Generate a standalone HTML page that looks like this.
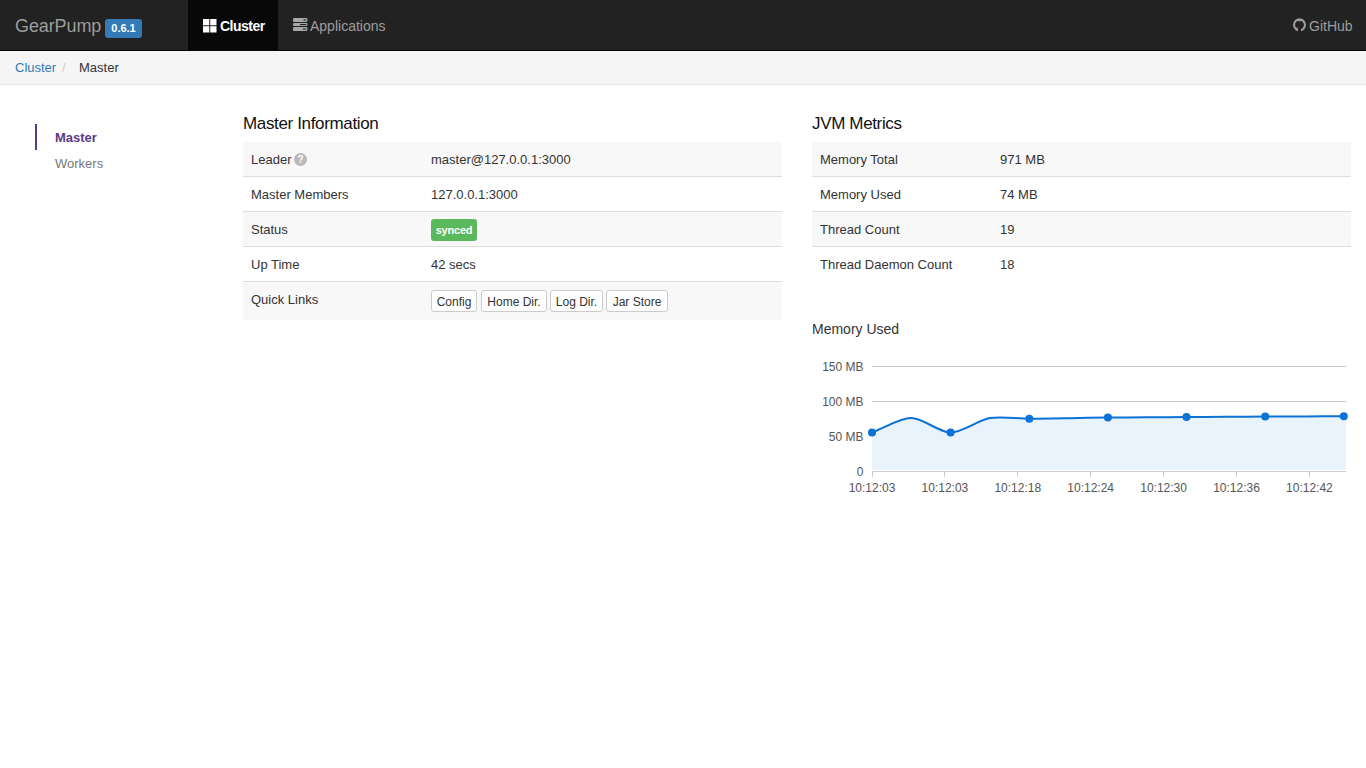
<!DOCTYPE html>
<html><head><meta charset="utf-8">
<style>
*{box-sizing:border-box;margin:0;padding:0}
html,body{width:1366px;height:768px;overflow:hidden;background:#fff;font-family:"Liberation Sans",sans-serif;color:#333;font-size:13px}
.a{position:absolute;white-space:nowrap}
#nav{position:absolute;left:0;top:0;width:1366px;height:51px;background:#222;border-bottom:1px solid #080808}
#act{position:absolute;left:188px;top:0;width:90px;height:50px;background:#080808}
#brand{left:15px;top:16px;font-size:18px;color:#9d9d9d;line-height:20px;letter-spacing:-0.1px}
#badge{left:105px;top:19px;width:37px;height:19px;background:#337ab7;border-radius:3px;color:#fff;font-weight:bold;font-size:11px;line-height:19px;text-align:center}
.nt{font-size:14px;line-height:20px;top:16px}
#bc{position:absolute;left:0;top:51px;width:1366px;height:34px;background:#f5f5f5;border-bottom:1px solid #e6e6e6}
#side{position:absolute;left:35px;top:124px;width:2px;height:26px;background:#5a3b86}
.h{font-size:17px;line-height:20px;color:#111;letter-spacing:-0.35px}
.row{position:absolute;height:35px;border-bottom:1px solid #ddd}
.row.s{background:#f8f8f8}
.row.last{border-bottom:none;height:38px}
.c1,.c2{position:absolute;top:0;line-height:16px;padding-top:10px;font-size:13px;color:#333}
.c1{left:8px}
.c2{left:188px}
.btn{position:absolute;top:8px;height:22px;border:1px solid #ccc;border-radius:3px;background:#fff;font-size:12px;line-height:20px;padding-top:1px;color:#333;text-align:center}
.lbl{position:absolute;left:188px;top:7px;width:46px;height:22px;background:#5cb85c;color:#fff;font-weight:bold;font-size:11px;border-radius:3px;line-height:22px;text-align:center;letter-spacing:-0.2px}
</style></head><body>
<div id="nav"></div>
<div id="act"></div>
<div class="a" id="brand">GearPump</div>
<div class="a" id="badge">0.6.1</div>
<svg class="a" style="left:203px;top:19px" width="14" height="14"><rect x="0" y="0" width="6.3" height="6.3" fill="#fff"/><rect x="7.2" y="0" width="6.3" height="6.3" fill="#fff"/><rect x="0" y="7.2" width="6.3" height="6.3" fill="#fff"/><rect x="7.2" y="7.2" width="6.3" height="6.3" fill="#fff"/></svg>
<div class="a nt" style="left:220px;color:#fff;font-weight:bold;letter-spacing:-0.5px">Cluster</div>
<svg class="a" style="left:293px;top:18px" width="15" height="14"><rect x="0" y="0" width="14.4" height="3.9" rx="1.2" fill="#a8a8a8"/><rect x="0" y="5" width="14.4" height="3" rx="1" fill="#a8a8a8"/><rect x="0" y="9.1" width="14.4" height="3.9" rx="1.2" fill="#a8a8a8"/><rect x="10.5" y="1.3" width="2.8" height="1.3" fill="#333"/><rect x="7" y="6" width="6.3" height="1.1" fill="#222"/><rect x="9.8" y="10.4" width="3.5" height="1.3" fill="#333"/><circle cx="12.5" cy="3.2" r=".8" fill="#5c5"/><circle cx="12.5" cy="9.8" r=".8" fill="#5c5"/></svg>
<div class="a nt" style="left:310px;color:#9d9d9d">Applications</div>
<svg class="a" style="left:1292px;top:17px" width="16" height="16"><circle cx="7.5" cy="7.8" r="5.5" fill="none" stroke="#9d9d9d" stroke-width="2.1"/><rect x="4.8" y="2.6" width="5.4" height="1.6" fill="#9d9d9d"/><rect x="6" y="11.5" width="3" height="3.5" fill="#222"/><rect x="4.6" y="10.5" width="1.2" height="1.6" fill="#9d9d9d"/></svg>
<div class="a nt" style="left:1309px;color:#9d9d9d">GitHub</div>

<div id="bc"></div>
<div class="a" style="left:15px;top:60px;font-size:13px;line-height:16px;color:#337ab7">Cluster</div>
<div class="a" style="left:62px;top:60px;font-size:13px;line-height:16px;color:#ccc">/</div>
<div class="a" style="left:79px;top:60px;font-size:13px;line-height:16px;color:#333">Master</div>

<div id="side"></div>
<div class="a" style="left:55px;top:130px;font-size:13px;line-height:16px;font-weight:bold;color:#5a3b86">Master</div>
<div class="a" style="left:55px;top:156px;font-size:13px;line-height:16px;color:#777">Workers</div>

<div class="a h" style="left:243px;top:114px">Master Information</div>
<div class="row s" style="left:243px;top:142px;width:539px"><div class="c1">Leader</div><div style="position:absolute;left:51px;top:11px;width:13px;height:13px;border-radius:50%;background:#b8b8b8;color:#fff;font-size:10px;line-height:13px;text-align:center;font-weight:bold">?</div><div class="c2">master@127.0.0.1:3000</div></div>
<div class="row" style="left:243px;top:177px;width:539px"><div class="c1">Master Members</div><div class="c2">127.0.0.1:3000</div></div>
<div class="row s" style="left:243px;top:212px;width:539px"><div class="c1">Status</div><div class="lbl">synced</div></div>
<div class="row" style="left:243px;top:247px;width:539px"><div class="c1">Up Time</div><div class="c2">42 secs</div></div>
<div class="row s last" style="left:243px;top:282px;width:539px"><div class="c1">Quick Links</div>
<div class="btn" style="left:188px;width:46px">Config</div><div class="btn" style="left:238px;width:66px">Home Dir.</div><div class="btn" style="left:307px;width:53px">Log Dir.</div><div class="btn" style="left:363px;width:62px">Jar Store</div></div>

<div class="a h" style="left:812px;top:114px">JVM Metrics</div>
<div class="row s" style="left:812px;top:142px;width:539px"><div class="c1">Memory Total</div><div class="c2">971 MB</div></div>
<div class="row" style="left:812px;top:177px;width:539px"><div class="c1">Memory Used</div><div class="c2">74 MB</div></div>
<div class="row s" style="left:812px;top:212px;width:539px"><div class="c1">Thread Count</div><div class="c2">19</div></div>
<div class="row" style="left:812px;top:247px;width:539px;border-bottom:none"><div class="c1">Thread Daemon Count</div><div class="c2">18</div></div>

<div class="a" style="left:812px;top:321px;font-size:14px;line-height:16px;color:#333">Memory Used</div>

<!--CHART--><svg class="a" style="left:0;top:0" width="1366" height="768">
<g stroke="#ccc" stroke-width="1" shape-rendering="crispEdges">
<line x1="872" y1="366.5" x2="1346" y2="366.5"/>
<line x1="872" y1="401.5" x2="1346" y2="401.5"/>
</g>
<path d="M872.0 432.5 C883.8 428.1 899.5 418.0 911.3 418.0 C923.1 418.0 938.8 432.5 950.6 432.5 C962.4 432.5 977.8 420.2 990.0 418.1 C1001.4 416.1 1017.5 418.7 1029.3 418.7 C1041.1 418.7 1056.8 418.4 1068.6 418.2 C1080.4 418.0 1096.1 417.7 1107.9 417.6 C1119.7 417.5 1135.4 417.4 1147.2 417.3 C1159.0 417.2 1174.7 417.1 1186.5 417.0 C1198.3 416.9 1214.1 416.9 1225.8 416.8 C1237.6 416.7 1253.4 416.7 1265.2 416.6 C1277.0 416.5 1292.7 416.5 1304.5 416.4 C1316.3 416.3 1332.0 416.3 1343.8 416.2 L1346 416.2 L1346 470 L872 470 Z" fill="#e9f3fb"/>
<g stroke="#ccc" stroke-width="1" shape-rendering="crispEdges">
<line x1="872" y1="471.5" x2="1346" y2="471.5"/>
<line x1="872.5" y1="471" x2="872.5" y2="477"/><line x1="944.5" y1="471" x2="944.5" y2="477"/><line x1="1017.5" y1="471" x2="1017.5" y2="477"/><line x1="1090.5" y1="471" x2="1090.5" y2="477"/><line x1="1163.5" y1="471" x2="1163.5" y2="477"/><line x1="1236.5" y1="471" x2="1236.5" y2="477"/><line x1="1309.5" y1="471" x2="1309.5" y2="477"/>
</g>
<path d="M872.0 432.5 C883.8 428.1 899.5 418.0 911.3 418.0 C923.1 418.0 938.8 432.5 950.6 432.5 C962.4 432.5 977.8 420.2 990.0 418.1 C1001.4 416.1 1017.5 418.7 1029.3 418.7 C1041.1 418.7 1056.8 418.4 1068.6 418.2 C1080.4 418.0 1096.1 417.7 1107.9 417.6 C1119.7 417.5 1135.4 417.4 1147.2 417.3 C1159.0 417.2 1174.7 417.1 1186.5 417.0 C1198.3 416.9 1214.1 416.9 1225.8 416.8 C1237.6 416.7 1253.4 416.7 1265.2 416.6 C1277.0 416.5 1292.7 416.5 1304.5 416.4 C1316.3 416.3 1332.0 416.3 1343.8 416.2" fill="none" stroke="#0b72d6" stroke-width="2"/>
<g fill="#0b72d6"><circle cx="872.0" cy="432.5" r="4"/><circle cx="950.6" cy="432.5" r="4"/><circle cx="1029.3" cy="418.7" r="4"/><circle cx="1107.9" cy="417.6" r="4"/><circle cx="1186.5" cy="417.0" r="4"/><circle cx="1265.2" cy="416.6" r="4"/><circle cx="1343.8" cy="416.2" r="4"/></g>
<g font-family="Liberation Sans" font-size="12" fill="#555" text-anchor="end">
<text x="863.5" y="371">150 MB</text><text x="863.5" y="406">100 MB</text><text x="863.5" y="441">50 MB</text><text x="863.5" y="476">0</text>
</g>
<g font-family="Liberation Sans" font-size="12" fill="#555" text-anchor="middle"><text x="872.0" y="492">10:12:03</text><text x="944.9" y="492">10:12:03</text><text x="1017.8" y="492">10:12:18</text><text x="1090.7" y="492">10:12:24</text><text x="1163.6" y="492">10:12:30</text><text x="1236.5" y="492">10:12:36</text><text x="1309.4" y="492">10:12:42</text></g>
</svg><!--/CHART-->
</body></html>
